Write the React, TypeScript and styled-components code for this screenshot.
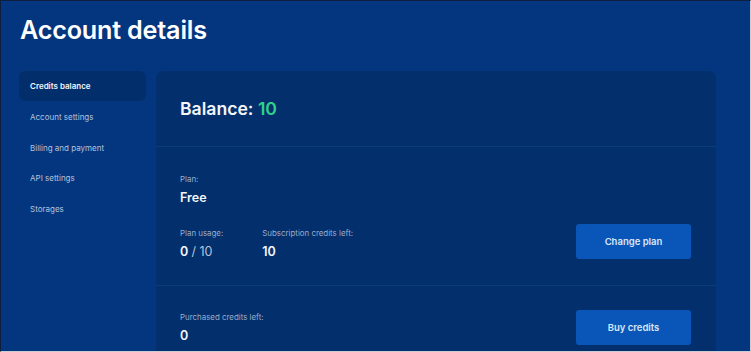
import * as React from 'react'
import styled, { createGlobalStyle } from 'styled-components'

const GlobalStyle = createGlobalStyle`
  html, body {
    margin: 0;
    padding: 0;
    height: 100%;
    overflow: hidden;
    background: #04367f;
  }
  * {
    box-sizing: border-box;
  }
`

const Frame = styled.div`
  width: 751px;
  height: 352px;
  overflow: hidden;
  background: #04367f;
  border-left: 1px solid #0e1e3c;
  border-top: 1px solid #0e1e3c;
  border-right: 1px solid #c9ccd2;
  border-bottom: 1px solid #c9ccd2;
  font-family: Inter, 'Noto Sans', sans-serif;
  color: #ffffff;
  padding: 12px 34px 0 18px;
`

const Title = styled.h1`
  margin: 0 0 24px 1px;
  font-size: 25.2px;
  line-height: 34px;
  font-weight: 600;
  letter-spacing: -0.2px;
`

const Layout = styled.div`
  display: grid;
  grid-template-columns: 127px 1fr;
  gap: 10px;
  align-items: start;
`

const Nav = styled.nav`
  display: flex;
  flex-direction: column;
  gap: 0.8px;
`

const NavItem = styled.div<{ active?: boolean }>`
  height: 30px;
  display: flex;
  align-items: center;
  padding: 0 11px;
  border-radius: 6px;
  font-size: 8px;
  font-weight: ${p => (p.active ? 600 : 400)};
  color: ${p => (p.active ? '#f1f5fc' : '#b3c2dc')};
  background: ${p => (p.active ? '#032e6c' : 'transparent')};
`

const Card = styled.section`
  background: #032f6d;
  border-radius: 8px;
  height: 300px;
`

const Section = styled.div<{ last?: boolean }>`
  display: flex;
  align-items: flex-start;
  justify-content: space-between;
  padding: 26px 25px 25px 24px;
  border-bottom: ${p => (p.last ? 'none' : '1px solid #0a3b7c')};
`

const Heading = styled.div`
  font-size: 17.6px;
  line-height: 22px;
  font-weight: 600;
  padding: 1px 0;
  color: #f3f6fb;
`

const Accent = styled.span`
  color: #2fd28b;
`

const Fields = styled.div`
  display: flex;
  flex-direction: column;
  gap: 22px;
  padding-top: 1px;
`

const FieldRow = styled.div`
  display: flex;
  gap: 39px;
`

const Field = styled.div`
  display: flex;
  flex-direction: column;
  gap: 6px;
`

const Label = styled.div`
  font-size: 7.9px;
  line-height: 10px;
  color: #9cadc9;
`

const Value = styled.div`
  font-size: 12.5px;
  line-height: 16px;
  font-weight: 600;
  color: #f3f6fb;
`

const Muted = styled.span`
  font-weight: 400;
  color: #b6c4dc;
`

const Button = styled.button<{ offset: number }>`
  width: 115px;
  height: 35px;
  margin-top: ${p => p.offset}px;
  border: none;
  border-radius: 3px;
  background: #0956b8;
  color: #dbe6f7;
  font-family: Inter, 'Noto Sans', sans-serif;
  font-size: 9.5px;
  font-weight: 600;
  cursor: pointer;
`

const navItems = ['Credits balance', 'Account settings', 'Billing and payment', 'API settings', 'Storages']

export default function App() {
  return (
    <>
      <GlobalStyle />
      <Frame>
        <Title>Account details</Title>
        <Layout>
          <Nav>
            {navItems.map((item, i) => (
              <NavItem key={item} active={i === 0}>
                {item}
              </NavItem>
            ))}
          </Nav>
          <Card>
            <Section>
              <Heading>
                Balance: <Accent>10</Accent>
              </Heading>
            </Section>
            <Section>
              <Fields>
                <Field>
                  <Label>Plan:</Label>
                  <Value>Free</Value>
                </Field>
                <FieldRow>
                  <Field>
                    <Label>Plan usage:</Label>
                    <Value>
                      0 <Muted>/ 10</Muted>
                    </Value>
                  </Field>
                  <Field>
                    <Label>Subscription credits left:</Label>
                    <Value>10</Value>
                  </Field>
                </FieldRow>
              </Fields>
              <Button offset={51}>Change plan</Button>
            </Section>
            <Section last>
              <Field>
                <Label>Purchased credits left:</Label>
                <Value>0</Value>
              </Field>
              <Button offset={-2}>Buy credits</Button>
            </Section>
          </Card>
        </Layout>
      </Frame>
    </>
  )
}
